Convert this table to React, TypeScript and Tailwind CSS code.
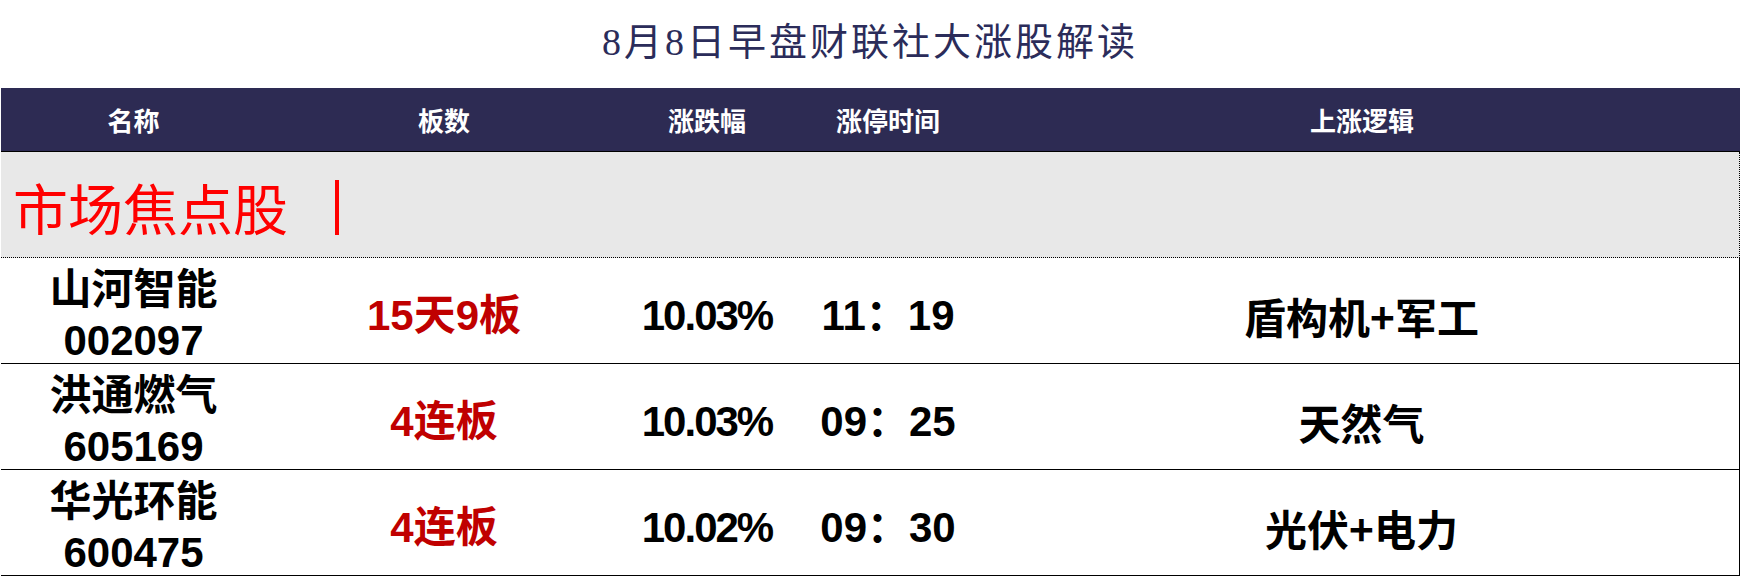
import React from "react";

type Row = {
  name: string;
  code: string;
  boards: string;
  pct: string;
  time: string;
  logic: string;
};

const rows: Row[] = [
  { name: "山河智能", code: "002097", boards: "15天9板", pct: "10.03%", time: "11：19", logic: "盾构机+军工" },
  { name: "洪通燃气", code: "605169", boards: "4连板", pct: "10.03%", time: "09：25", logic: "天然气" },
  { name: "华光环能", code: "600475", boards: "4连板", pct: "10.02%", time: "09：30", logic: "光伏+电力" },
];

const cols = "grid grid-cols-[265px_356px_170px_192px_1fr]";
const sans = "font-['Liberation_Sans','Noto_Sans_CJK_SC',sans-serif]";

export default function App() {
  return (
    <div className="w-[1740px] h-[576px] bg-white overflow-hidden">
      {/* 标题 */}
      <div className="h-[88px] flex items-center justify-center pb-[4px]">
        <h1 className="font-['Liberation_Serif','Noto_Sans_CJK_SC',serif] text-[38px] tracking-[3px] text-[#2b2c5a] font-normal leading-none">
          8月8日早盘财联社大涨股解读
        </h1>
      </div>

      <div className="ml-px">
        {/* 表头 */}
        <div className={`${cols} h-[64px] bg-[#2d2b53] border-b border-black text-white text-[26px] font-bold font-['Noto_Sans_CJK_SC',sans-serif]`}>
          <div className="flex items-center justify-center">名称</div>
          <div className="flex items-center justify-center">板数</div>
          <div className="flex items-center justify-center">涨跌幅</div>
          <div className="flex items-center justify-center">涨停时间</div>
          <div className="flex items-center justify-center">上涨逻辑</div>
        </div>

        {/* 分组 */}
        <div className="h-[106px] bg-[#e8e8e8] border-r border-b border-dotted border-r-solid border-black flex items-center pl-[12px] pt-[4px]">
          <span className="font-['Noto_Sans_CJK_SC',serif] text-[55px] leading-none text-[#ff0000] font-normal">
            市场焦点股
          </span>
          <span className="ml-[47px] w-[4px] h-[55px] bg-[#ff0000] mt-[2px]" />
        </div>

        {rows.map((r, i) => (
          <div
            key={r.code}
            className={`${cols} ${sans} h-[106px] border-r border-solid border-black font-bold text-[42px] ${
              i === rows.length - 1 ? "border-b border-b-solid" : "border-b border-b-dotted"
            }`}
          >
            <div className="flex flex-col items-center justify-center leading-[51px] text-black pt-[6px]">
              <span>{r.name}</span>
              <span>{r.code}</span>
            </div>
            <div className="flex items-center justify-center text-[#c00000] pt-[6px]">{r.boards}</div>
            <div className="flex items-center justify-center text-black tracking-[-2px] pt-[6px]">{r.pct}</div>
            <div className="flex items-center justify-center text-black pt-[6px]">{r.time}</div>
            <div className="flex items-center justify-center text-black font-['Noto_Sans_CJK_SC',sans-serif] pt-[6px]">{r.logic}</div>
          </div>
        ))}
      </div>
    </div>
  );
}
